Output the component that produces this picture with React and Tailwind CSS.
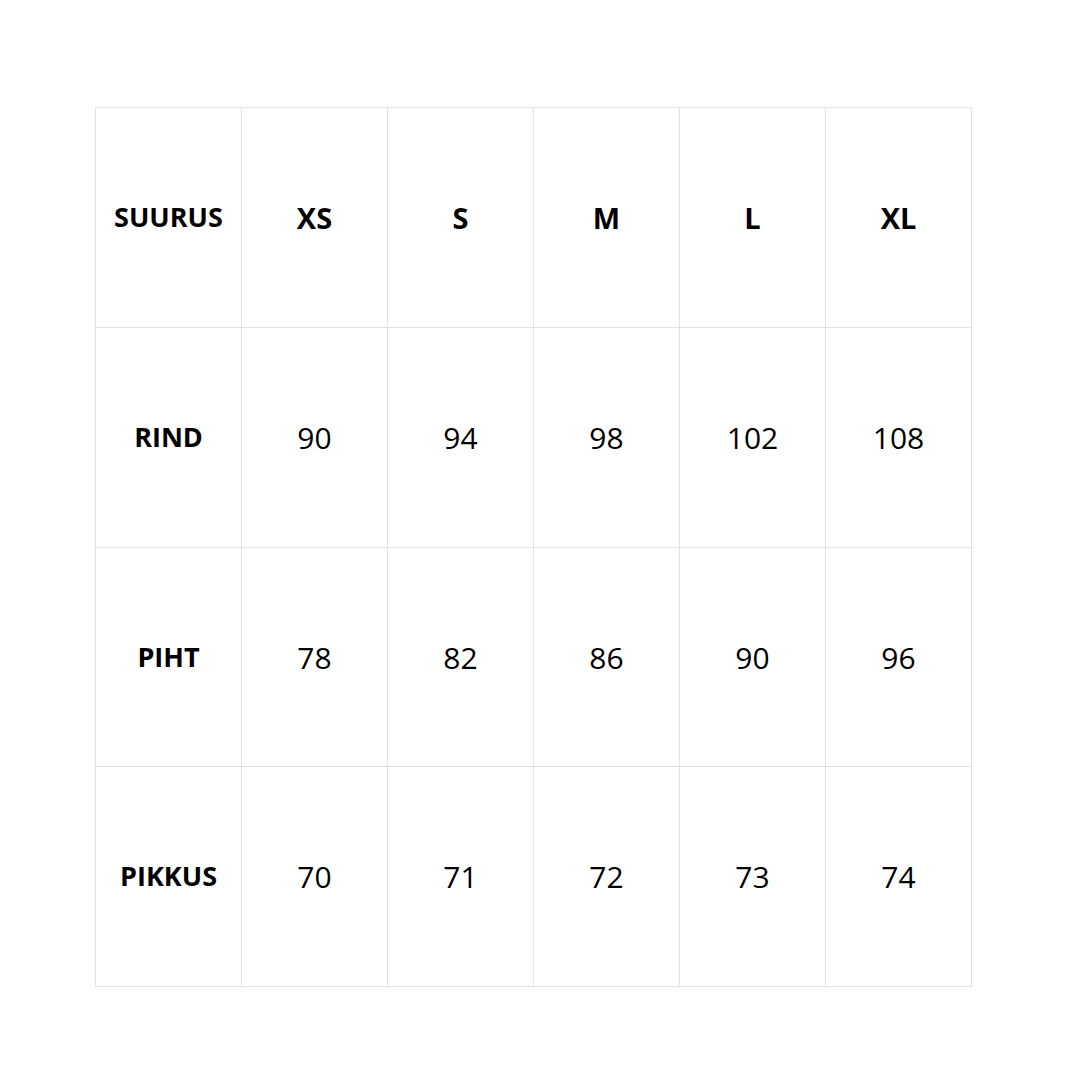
import React from 'react';

const SIZES = ['XS', 'S', 'M', 'L', 'XL'];

const ROWS = [
  { label: 'RIND', values: [90, 94, 98, 102, 108], h: 'h-[220px]' },
  { label: 'PIHT', values: [78, 82, 86, 90, 96], h: 'h-[219px]' },
  { label: 'PIKKUS', values: [70, 71, 72, 73, 74], h: 'h-[220px]' }
];

const Cell = ({ children, className = '' }) => (
  <div className={`flex items-center justify-center border-r border-b border-[#e2e2e2] text-black ${className}`}>
    {children}
  </div>
);

const App = () => {
  return (
    <div
      className="min-h-[1080px] w-[1080px] bg-white pt-[107px] pl-[95px]"
      style={{ fontFamily: '"Open Sans", sans-serif' }}
    >
      <div className="grid w-fit grid-cols-[repeat(6,146px)] border-l border-t border-[#e2e2e2]">
        <Cell className="h-[220px] text-[27px] font-bold">SUURUS</Cell>
        {SIZES.map((s) => (
          <Cell key={s} className="h-[220px] text-[29px] font-bold">{s}</Cell>
        ))}

        {ROWS.map((row) => (
          <React.Fragment key={row.label}>
            <Cell className={`${row.h} text-[27px] font-bold`}>{row.label}</Cell>
            {row.values.map((v, i) => (
              <Cell key={i} className={`${row.h} text-[30px]`}>{v}</Cell>
            ))}
          </React.Fragment>
        ))}
      </div>
    </div>
  );
};

export default App;
